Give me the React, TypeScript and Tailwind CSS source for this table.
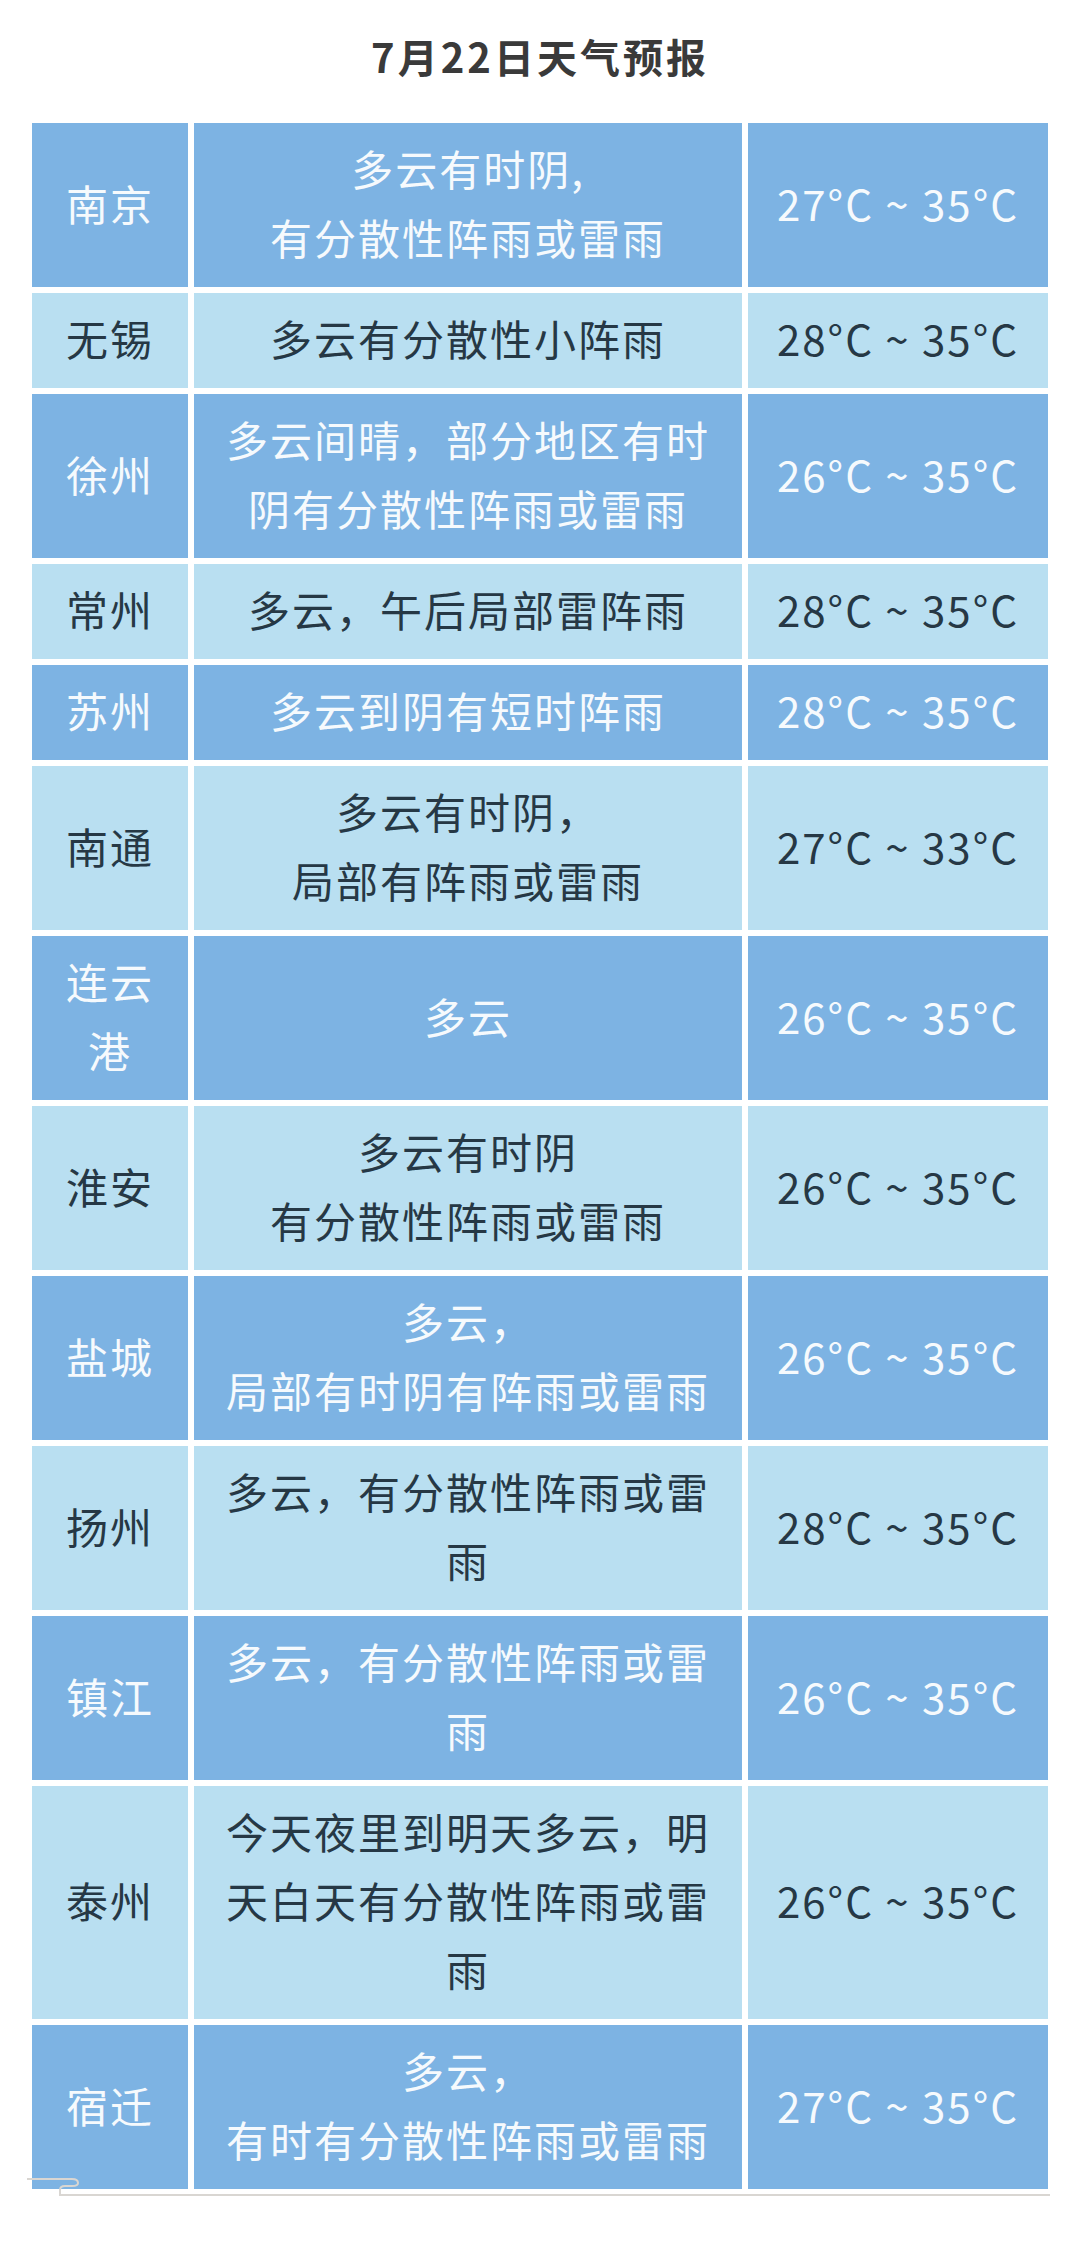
import React from "react";

type Row = {
  city: string[];
  desc: string[];
  temp: string;
};

const rows: Row[] = [
  { city: ["南京"], desc: ["多云有时阴,", "有分散性阵雨或雷雨"], temp: "27°C ~ 35°C" },
  { city: ["无锡"], desc: ["多云有分散性小阵雨"], temp: "28°C ~ 35°C" },
  { city: ["徐州"], desc: ["多云间晴，部分地区有时", "阴有分散性阵雨或雷雨"], temp: "26°C ~ 35°C" },
  { city: ["常州"], desc: ["多云，午后局部雷阵雨"], temp: "28°C ~ 35°C" },
  { city: ["苏州"], desc: ["多云到阴有短时阵雨"], temp: "28°C ~ 35°C" },
  { city: ["南通"], desc: ["多云有时阴，", "局部有阵雨或雷雨"], temp: "27°C ~ 33°C" },
  { city: ["连云", "港"], desc: ["多云"], temp: "26°C ~ 35°C" },
  { city: ["淮安"], desc: ["多云有时阴", "有分散性阵雨或雷雨"], temp: "26°C ~ 35°C" },
  { city: ["盐城"], desc: ["多云，", "局部有时阴有阵雨或雷雨"], temp: "26°C ~ 35°C" },
  { city: ["扬州"], desc: ["多云，有分散性阵雨或雷", "雨"], temp: "28°C ~ 35°C" },
  { city: ["镇江"], desc: ["多云，有分散性阵雨或雷", "雨"], temp: "26°C ~ 35°C" },
  {
    city: ["泰州"],
    desc: ["今天夜里到明天多云，明", "天白天有分散性阵雨或雷", "雨"],
    temp: "26°C ~ 35°C",
  },
  { city: ["宿迁"], desc: ["多云，", "有时有分散性阵雨或雷雨"], temp: "27°C ~ 35°C" },
];

function Cell({ lines, dark }: { lines: string[]; dark: boolean }) {
  return (
    <div
      className={
        "flex flex-col items-center justify-center pt-[10px] pb-[16px] text-center whitespace-nowrap " +
        (dark ? "bg-[#7db3e3] text-[#f6fafd]" : "bg-[#b9dff1] text-[#263845]")
      }
    >
      {lines.map((l, i) => (
        <div key={i}>{l}</div>
      ))}
    </div>
  );
}

export default function App() {
  return (
    <div
      className="relative min-h-[2251px] w-[1080px] bg-white"
      style={{ fontFamily: '"Noto Sans CJK SC", "Noto Sans", sans-serif' }}
    >
      {/* title */}
      <h1 className="pt-[32px] text-center text-[40px] font-bold leading-[48px] tracking-[3px] text-[#3a3a3a]">
        7月22日天气预报
      </h1>

      {/* table */}
      <div className="mx-[32px] mt-[43px] flex flex-col gap-[6px] text-[42px] leading-[69px] tracking-[2px]">
        {rows.map((r, i) => {
          const dark = i % 2 === 0;
          return (
            <div key={i} className="grid grid-cols-[156px_548px_300px] gap-x-[6px]">
              <Cell lines={r.city} dark={dark} />
              <Cell lines={r.desc} dark={dark} />
              <Cell lines={[r.temp]} dark={dark} />
            </div>
          );
        })}
      </div>

      {/* little curled stroke at the bottom-left corner */}
      <svg
        className="absolute left-0 top-[2170px]"
        width="1080"
        height="40"
        viewBox="0 2170 1080 40"
        fill="none"
      >
        <path
          d="M27 2179 H72 Q78 2179 78 2183 Q78 2186 72 2186 H65 Q60 2186 60 2190 V2195 H1050"
          stroke="#d9d6d2"
          strokeWidth="2"
        />
      </svg>
    </div>
  );
}
